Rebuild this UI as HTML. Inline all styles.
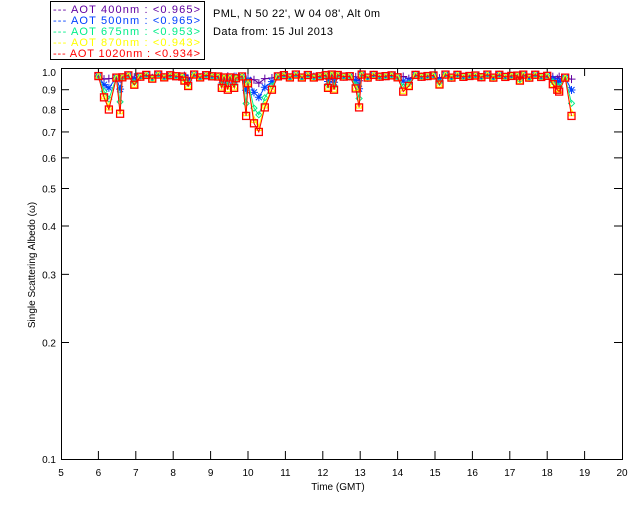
<!DOCTYPE html>
<html><head><meta charset="utf-8"><style>
html,body{margin:0;padding:0;background:#fff;width:640px;height:512px;overflow:hidden}
svg text{font-family:"Liberation Sans",sans-serif;font-size:10px}
svg text.l{font-size:11px}
</style></head><body>
<svg id="s" width="640" height="512" xmlns="http://www.w3.org/2000/svg">
<rect x="50.5" y="1.5" width="154" height="58" fill="#fff" stroke="#000" stroke-width="1"/>
<text class="l" x="53" y="13" fill="#6000a0" textLength="147">--- AOT  400nm : &lt;0.965&gt;</text>
<text class="l" x="53" y="24" fill="#0040ff" textLength="147">--- AOT  500nm : &lt;0.965&gt;</text>
<text class="l" x="53" y="35" fill="#00ee88" textLength="147">--- AOT  675nm : &lt;0.953&gt;</text>
<text class="l" x="53" y="46" fill="#ffff00" textLength="147">--- AOT  870nm : &lt;0.943&gt;</text>
<text class="l" x="53" y="57" fill="#ff0000" textLength="147">--- AOT 1020nm : &lt;0.934&gt;</text>
<text class="l" x="213" y="17" textLength="167">PML, N 50 22', W 04 08', Alt 0m</text>
<text class="l" x="213" y="35" textLength="120">Data from: 15 Jul 2013</text>
<rect x="61.5" y="68.5" width="561" height="391" fill="none" stroke="#000"/>
<g id="ax"></g>
<g id="data"></g>
<text x="338" y="490" text-anchor="middle">Time (GMT)</text>
<text transform="translate(35,265) rotate(-90)" text-anchor="middle">Single Scattering Albedo (ω)</text>
</svg>
<script>
function X(t){return 61+(t-5)*37.4}
function Y(v){return 459-(Math.log10(v)+1)*387}
var ax=document.getElementById("ax"),h="";
for(var t=5;t<=20;t++){var x=X(t);h+='<text x="'+x+'" y="476" text-anchor="middle">'+t+'</text>';if(t>5&&t<20)h+='<line x1="'+x+'" y1="459" x2="'+x+'" y2="451" stroke="#000"/><line x1="'+x+'" y1="68" x2="'+x+'" y2="76" stroke="#000"/>';}
[[1.0,"1.0"],[0.9,"0.9"],[0.8,"0.8"],[0.7,"0.7"],[0.6,"0.6"],[0.5,"0.5"],[0.4,"0.4"],[0.3,"0.3"],[0.2,"0.2"],[0.1,"0.1"]].forEach(function(a){var y=Y(a[0]);h+='<text x="56" y="'+(y+4)+'" text-anchor="end">'+a[1]+'</text>';if(a[0]<1&&a[0]>0.1)h+='<line x1="61" y1="'+y+'" x2="69" y2="'+y+'" stroke="#000"/><line x1="622" y1="'+y+'" x2="614" y2="'+y+'" stroke="#000"/>';});
ax.innerHTML=h;
var dips=[[6.15,0.86],[6.28,0.80],[6.58,0.78],[7.0,0.83],[7.49,0.93],[8.3,0.95],[8.4,0.92],[9.30,0.91],[9.46,0.90],[9.63,0.91],[9.95,0.77],[10.16,0.737],[10.29,0.70],[10.45,0.81],[10.64,0.90],[11.81,0.94],[12.14,0.91],[12.3,0.90],[12.9,0.87],[12.97,0.81],[14.15,0.89],[14.3,0.92],[15.13,0.92],[17.27,0.95],[18.15,0.93],[18.27,0.90],[18.32,0.89],[18.65,0.77]];
var pts=[];for(var t=6.0;t<=18.56;t+=0.16)pts.push(t);
dips.forEach(function(d){pts.push(d[0])});
pts.sort(function(a,b){return a-b});
var filt=[];pts.forEach(function(t){if(!filt.length||t-filt[filt.length-1]>0.05)filt.push(t)});
pts=filt;
function base(i){return 0.985-0.018*((Math.sin(i*2.7)+1)/2)}
function val(t,i,f){var d=0;dips.forEach(function(p){var depth=base(i)-p[1];var dd=depth*Math.max(0,1-Math.abs(t-p[0])/0.06);if(dd>d)d=dd});return Math.min(1.0,base(i)-d*f)}
var ser=[["#6000a0",0.12,"+"],["#0040ff",0.4,"*"],["#00ee88",0.72,"o"],["#ffff00",0.93,"t"],["#ff0000",1,"s"]];
var g="";
ser.forEach(function(s){var p=pts.map(function(t,i){return X(t).toFixed(1)+","+Y(val(t,i,s[1])).toFixed(1)});
g+='<polyline points="'+p.join(" ")+'" fill="none" stroke="'+s[0]+'" stroke-width="1"/>';
pts.forEach(function(t,i){var x=X(t),y=Y(val(t,i,s[1]));
if(s[2]=="s")g+='<rect x="'+(x-3.5)+'" y="'+(y-3.5)+'" width="7" height="7" fill="none" stroke="'+s[0]+'" stroke-width="1.3"/>';
else if(s[2]=="o")g+='<path d="M'+(x-3)+','+y+'L'+x+','+(y-3)+'L'+(x+3)+','+y+'L'+x+','+(y+3)+'Z" fill="none" stroke="'+s[0]+'"/>';
else if(s[2]=="t")g+='<path d="M'+(x-3)+','+(y+3)+'L'+x+','+(y-3)+'L'+(x+3)+','+(y+3)+'Z" fill="none" stroke="'+s[0]+'"/>';
else if(s[2]=="*")g+='<path d="M'+(x-4)+','+y+'H'+(x+4)+'M'+x+','+(y-4)+'V'+(y+4)+'M'+(x-3)+','+(y-3)+'L'+(x+3)+','+(y+3)+'M'+(x-3)+','+(y+3)+'L'+(x+3)+','+(y-3)+'" stroke="'+s[0]+'"/>';
else g+='<path d="M'+(x-4)+','+y+'H'+(x+4)+'M'+x+','+(y-4)+'V'+(y+4)+'" stroke="'+s[0]+'"/>';});});
document.getElementById("data").innerHTML=g;
</script>
</body></html>
